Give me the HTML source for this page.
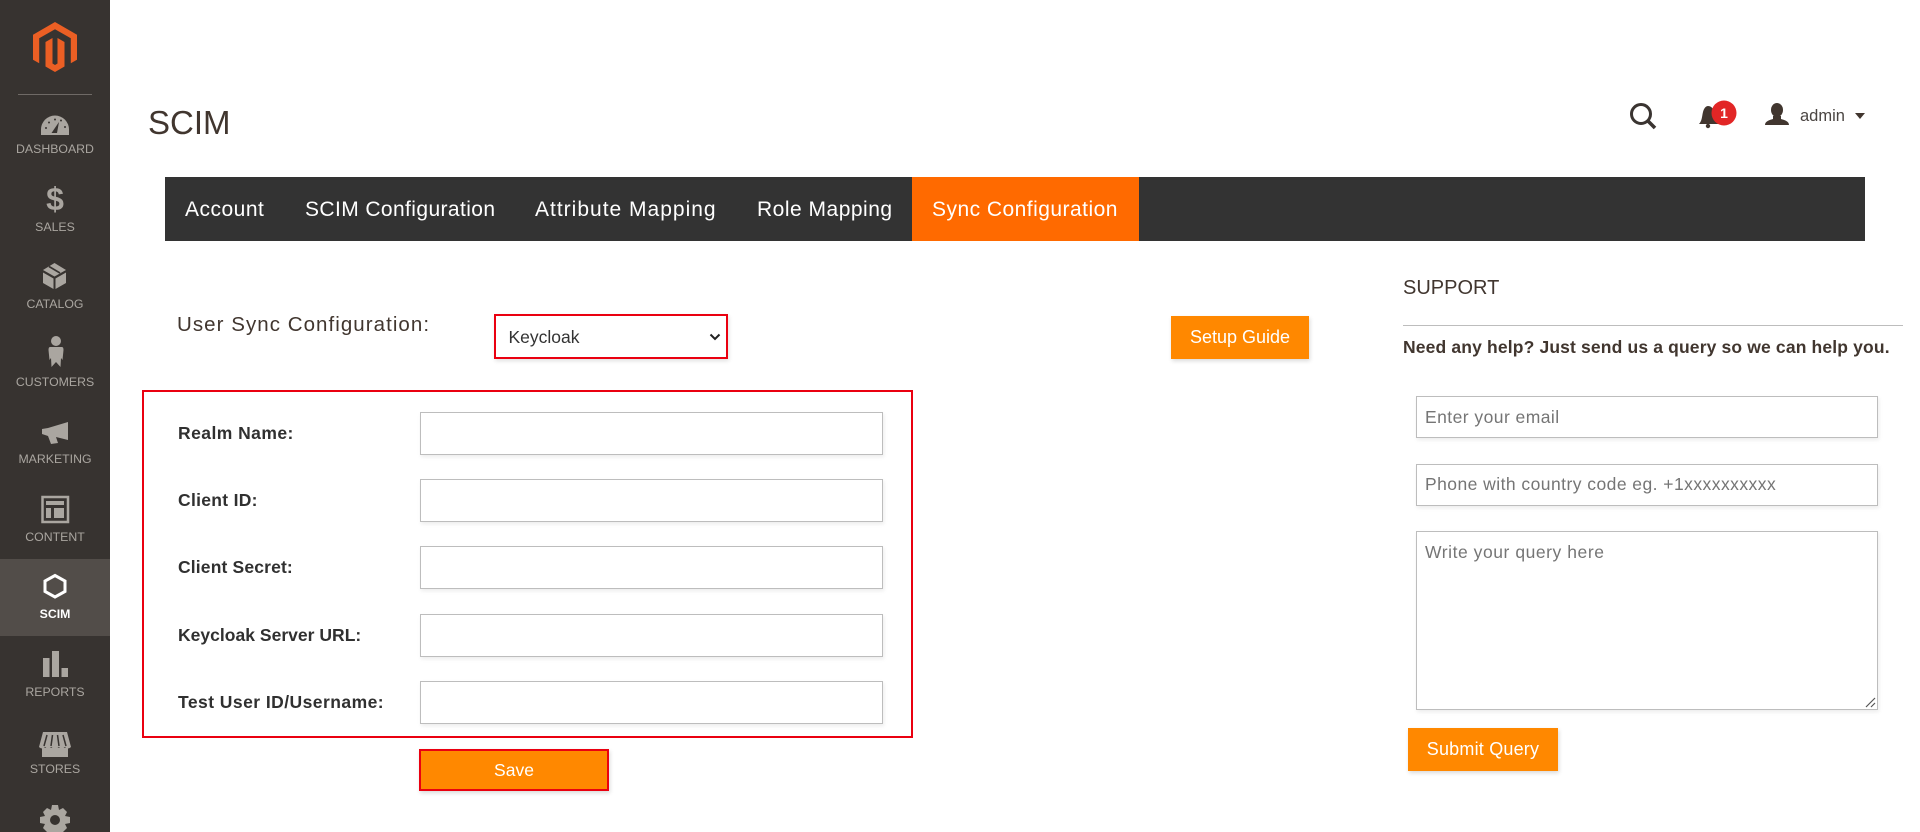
<!DOCTYPE html>
<html><head><meta charset="utf-8"><title>SCIM</title>
<style>
html,body{margin:0;padding:0;background:#fff;width:1920px;height:832px;overflow:hidden}
body{font-family:"Liberation Sans",sans-serif;position:relative;color:#41362f}
.a{position:absolute;white-space:nowrap}
#side{position:absolute;left:0;top:0;width:110px;height:832px;background:#373330}
.ml{position:absolute;left:0;width:110px;text-align:center;font-size:12.300px;line-height:16px;color:#aaa6a0}
.t{position:absolute;white-space:nowrap;color:#fff;font-size:21px;line-height:28px;top:196px}
.lb{position:absolute;left:178px;font-weight:bold;font-size:17.500px;line-height:22px;letter-spacing:.45px;color:#303030;white-space:nowrap}
.in{position:absolute;box-sizing:border-box;background:#fff;border:1px solid #bdbdbd;box-shadow:1px 2px 4px rgba(0,0,0,.08)}
.ph{position:absolute;left:1425px;font-size:17.500px;line-height:22px;letter-spacing:.45px;color:#757575;white-space:nowrap}
.btn{position:absolute;box-sizing:border-box;background:#ff8800;color:#fff;font-size:18px;text-align:center;box-shadow:1px 2px 4px rgba(0,0,0,.15)}
</style></head><body>
<div id="side"></div>
<div class="a" style="left:0;top:559px;width:110px;height:77px;background:#524d49"></div>
<svg class="a" style="left:0;top:0" width="110" height="832" viewBox="0 0 110 832" fill="#aaa6a0">
<g transform="translate(33,22)" fill="#eb5f24">
<path d="M22 0L44 12.700V37.700L37.800 41.300V16.300L22 7.200L6.200 16.300V41.300L0 37.700V12.700Z"/>
<path d="M12.500 20L19.500 16V41.500L22 43L24.500 41.500V16L31.500 20V44.500L22 50L12.500 44.500Z"/>
</g>
<rect x="18" y="94" width="74" height="1" fill="#6f6a66"/>
<path d="M41 135V129.500A14 14 0 0 1 69 129.500V135Z"/>
<path d="M51.500 133L59 122L57 133Z" fill="#373330"/>
<g fill="#373330"><circle cx="46" cy="128" r="1"/><circle cx="49" cy="122.500" r="1"/><circle cx="55" cy="119.500" r="1"/><circle cx="61" cy="120.500" r="1"/><circle cx="65" cy="127" r="1"/></g>
<text x="55" y="210" text-anchor="middle" font-family="Liberation Sans" font-weight="bold" font-size="32">$</text>
<path d="M54.500 263L66 270L54.500 276.500L43 270Z"/>
<path d="M43 272.500L53.500 278.500V289L43 283Z"/><path d="M55.500 278.500L66 272.500V283L55.500 289Z"/>
<path d="M49 266.500L60 273" stroke="#373330" stroke-width="1.600" fill="none"/>
<circle cx="56" cy="341" r="5"/>
<path d="M50 347H62C63 347 63.500 348 63.500 350L62.500 360L61 358L60.500 367L56 362L51.500 367L51 358L49.500 360L48.500 350C48.500 348 49 347 50 347Z"/>
<path d="M42 429L48 428L68 422V440L56 437L58 443L51 444L48 436L42 434Z"/>
<path d="M42.500 497H68V522H42.500Z" fill="none" stroke="#aaa6a0" stroke-width="2.500"/>
<path d="M46 501H64V505H46ZM46 508H51V518H46ZM54 508H64V518H54Z"/>
<path d="M55 575.500L65 581V591.500L55 597L45 591.500V581Z" fill="none" stroke="#fff" stroke-width="3"/>
<path d="M43 658H49.500V677H43ZM52 651H59V677H52ZM61.500 668H68V677H61.500Z"/>
<path d="M43 732H67L71 747C69 749 66 749 65 747C63 749 60 749 59 747C57 749 53 749 51 747C50 749 47 749 45 747C44 749 41 749 39 747Z"/>
<rect x="42" y="748" width="26" height="9"/>
<path d="M47 735L44 746M52.500 735L51 746M57.500 735L59 746M63 735L66 746" stroke="#373330" stroke-width="1.500" fill="none"/>
<path d="M52 805H58L59 810L63 808L67 812L65 816L70 817V823L65 824L67 828L63 832H47L43 828L45 824L40 823V817L45 816L43 812L47 808L51 810Z"/>
<circle cx="55" cy="820" r="5" fill="#373330"/>
</svg>
<div class="ml" style="top:141px">DASHBOARD</div>
<div class="ml" style="top:219px">SALES</div>
<div class="ml" style="top:296px">CATALOG</div>
<div class="ml" style="top:374px">CUSTOMERS</div>
<div class="ml" style="top:451px">MARKETING</div>
<div class="ml" style="top:529px">CONTENT</div>
<div class="ml" style="top:606px;color:#fff;font-weight:bold">SCIM</div>
<div class="ml" style="top:684px">REPORTS</div>
<div class="ml" style="top:761px">STORES</div>

<div class="a" style="left:148px;top:101px;font-size:33px;line-height:44px;color:#41362f">SCIM</div>

<svg class="a" style="left:1625px;top:98px" width="245" height="36" viewBox="1625 98 245 36" fill="#41362f">
<circle cx="1641" cy="114" r="9.500" fill="none" stroke="#3a3431" stroke-width="3"/>
<path d="M1648 121L1655 128" stroke="#3a3431" stroke-width="3.600"/>
<path d="M1699 124C1702 121 1702 116 1703 112C1704 108 1706 106 1708 106C1711 106 1713 108 1714 112C1715 116 1715 121 1719 124Z"/>
<circle cx="1708" cy="126" r="2.200"/>
<circle cx="1724" cy="113" r="12.500" fill="#e22626"/>
<text x="1724" y="118" text-anchor="middle" font-family="Liberation Sans" font-weight="bold" font-size="14" fill="#fff">1</text>
<ellipse cx="1777" cy="110" rx="6" ry="7"/>
<path d="M1773 116H1781V119C1784 120 1789 121 1789 125H1765C1765 121 1770 120 1773 119Z"/>
<path d="M1855 113H1865L1860 119Z"/>
</svg>
<div class="a" style="left:1800px;top:105px;font-size:16.500px;line-height:22px;color:#4a4542">admin</div>

<div class="a" style="left:165px;top:177px;width:1700px;height:64px;background:#333"></div>
<div class="a" style="left:912px;top:177px;width:227px;height:64px;background:#ff6a00"></div>
<div class="t" style="left:185px;letter-spacing:.5px">Account</div>
<div class="t" style="left:305px;letter-spacing:.4px">SCIM Configuration</div>
<div class="t" style="left:535px;letter-spacing:1px">Attribute Mapping</div>
<div class="t" style="left:757px;letter-spacing:.5px">Role Mapping</div>
<div class="t" style="left:932px;letter-spacing:.47px">Sync Configuration</div>

<div class="a" style="left:177px;top:312px;font-size:20.500px;line-height:26px;letter-spacing:1.05px;color:#41362f">User Sync Configuration:</div>
<div class="a" style="left:494px;top:314px;width:234px;height:45px;box-sizing:border-box;border:2.500px solid #ea0010;background:#fff;box-shadow:1px 2px 4px rgba(0,0,0,.12)"></div>
<div class="a" style="left:508.500px;top:325px;font-size:17.500px;line-height:24px;color:#333">Keycloak</div>
<svg class="a" style="left:709px;top:332px" width="12" height="10" viewBox="0 0 12 10"><path d="M1.500 2.500L6 7L10.500 2.500" fill="none" stroke="#222" stroke-width="2"/></svg>
<div class="btn" style="left:1171px;top:316px;width:138px;height:43px;line-height:43px">Setup Guide</div>

<div class="a" style="left:142px;top:390px;width:771px;height:348px;box-sizing:border-box;border:2.500px solid #ea0010"></div>
<div class="lb" style="top:422px">Realm Name:</div>
<div class="lb" style="top:489px;letter-spacing:.3px">Client ID:</div>
<div class="lb" style="top:556px;letter-spacing:.15px">Client Secret:</div>
<div class="lb" style="top:624px;letter-spacing:.02px">Keycloak Server URL:</div>
<div class="lb" style="top:691px">Test User ID/Username:</div>
<div class="in" style="left:420px;top:412px;width:463px;height:43px"></div>
<div class="in" style="left:420px;top:479px;width:463px;height:43px"></div>
<div class="in" style="left:420px;top:546px;width:463px;height:43px"></div>
<div class="in" style="left:420px;top:614px;width:463px;height:43px"></div>
<div class="in" style="left:420px;top:681px;width:463px;height:43px"></div>
<div class="btn" style="left:419px;top:749px;width:190px;height:42px;line-height:38px;font-size:17.500px;border:2.500px solid #ea0010">Save</div>

<div class="a" style="left:1403px;top:274px;font-size:20px;line-height:28px;color:#41362f">SUPPORT</div>
<div class="a" style="left:1403px;top:325px;width:500px;height:1px;background:#bdbdbd"></div>
<div class="a" style="left:1403px;top:336px;font-size:17.500px;font-weight:bold;line-height:22px;letter-spacing:.15px;color:#41362f">Need any help? Just send us a query so we can help you.</div>
<div class="in" style="left:1416px;top:396px;width:462px;height:42px"></div>
<div class="ph" style="top:406px">Enter your email</div>
<div class="in" style="left:1416px;top:464px;width:462px;height:42px"></div>
<div class="ph" style="top:473px">Phone with country code eg. +1xxxxxxxxxx</div>
<div class="in" style="left:1416px;top:531px;width:462px;height:179px"></div>
<div class="ph" style="top:541px;letter-spacing:.55px">Write your query here</div>
<svg class="a" style="left:1865px;top:697px" width="12" height="12" viewBox="0 0 12 12"><path d="M1 10L10 1M6 10L10 6" stroke="#555" stroke-width="1.200"/></svg>
<div class="btn" style="left:1408px;top:728px;width:150px;height:43px;line-height:43px;letter-spacing:.2px">Submit Query</div>
</body></html>
